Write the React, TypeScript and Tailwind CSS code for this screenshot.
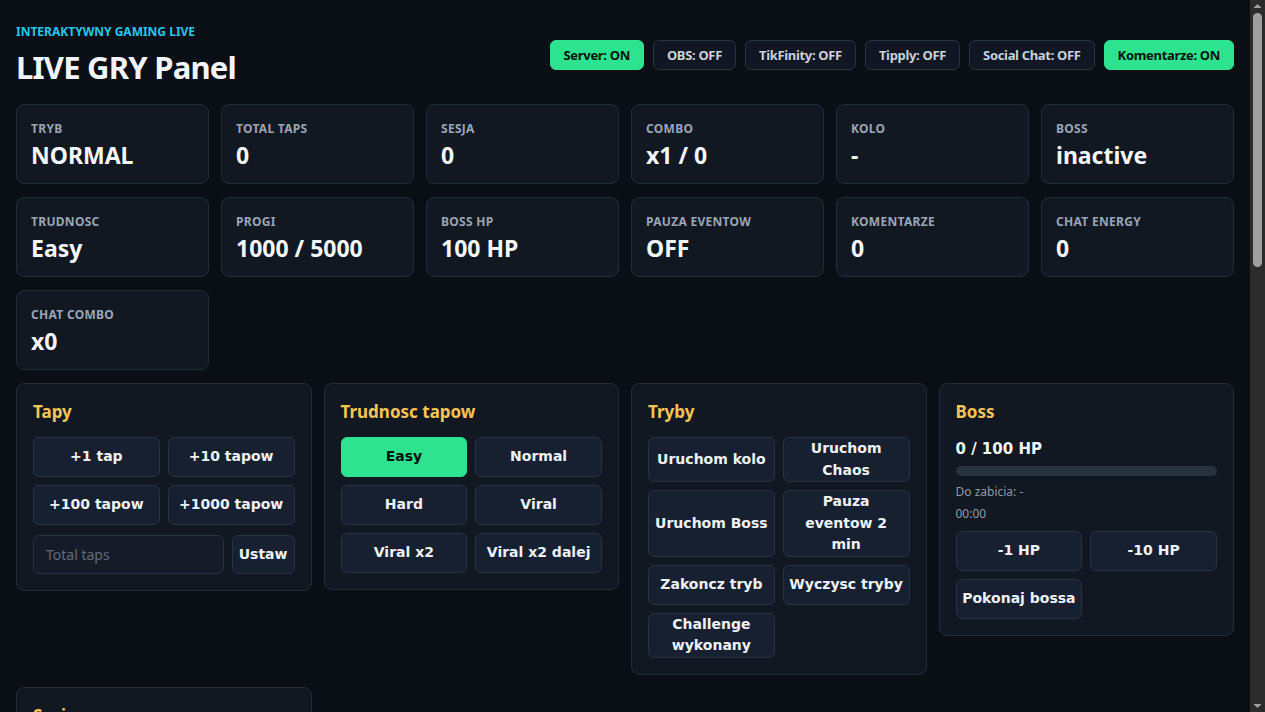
import React from 'react'

const STATS: { label: string; value: string }[] = [
  { label: 'Tryb', value: 'NORMAL' },
  { label: 'Total taps', value: '0' },
  { label: 'Sesja', value: '0' },
  { label: 'Combo', value: 'x1 / 0' },
  { label: 'Kolo', value: '-' },
  { label: 'Boss', value: 'inactive' },
  { label: 'Trudnosc', value: 'Easy' },
  { label: 'Progi', value: '1000 / 5000' },
  { label: 'Boss HP', value: '100 HP' },
  { label: 'Pauza eventow', value: 'OFF' },
  { label: 'Komentarze', value: '0' },
  { label: 'Chat energy', value: '0' },
  { label: 'Chat combo', value: 'x0' },
]

const STATUS: { label: string; on: boolean }[] = [
  { label: 'Server: ON', on: true },
  { label: 'OBS: OFF', on: false },
  { label: 'TikFinity: OFF', on: false },
  { label: 'Tipply: OFF', on: false },
  { label: 'Social Chat: OFF', on: false },
  { label: 'Komentarze: ON', on: true },
]

const btnFont = { fontFamily: '"DejaVu Sans", Verdana, sans-serif' }

function Btn({ children, active = false }: { children: React.ReactNode; active?: boolean }) {
  return (
    <button
      style={btnFont}
      className={
        active
          ? 'min-h-[40px] rounded-md border border-[#2ee38f] bg-[#2ee38f] px-[5px] py-0 text-[14px] leading-[21.5px] font-bold text-[#06130c]'
          : 'min-h-[40px] rounded-md border border-[#283243] bg-[#172030] px-[5px] py-0 text-[14px] leading-[21.5px] font-bold text-[#eef2f7]'
      }
    >
      {children}
    </button>
  )
}

function Panel({ title, children }: { title: string; children: React.ReactNode }) {
  return (
    <div className="rounded-lg border border-[#232c3a] bg-[#121822] p-4">
      <h2 className="mb-[13px] text-[17px] leading-6 font-bold text-[#f6c453]">{title}</h2>
      {children}
    </div>
  )
}

// window scrollbar (the page is longer than the viewport)
function Scrollbar() {
  return (
    <div className="fixed top-0 right-0 flex h-screen w-[15px] flex-col items-center bg-[#2b2b2b]">
      <svg width="15" height="13" viewBox="0 0 15 13" className="shrink-0">
        <path d="M3.5 8 L7.5 4 L11.5 8 Z" fill="#a3a3a3" />
      </svg>
      <div className="h-[254px] w-[9px] shrink-0 rounded-full bg-[#9f9f9f]" />
      <div className="flex-1" />
      <svg width="15" height="13" viewBox="0 0 15 13" className="shrink-0">
        <path d="M3.5 5 L7.5 9 L11.5 5 Z" fill="#a3a3a3" />
      </svg>
    </div>
  )
}

export default function App() {
  return (
    <div
      className="min-h-screen bg-[#0a0e15] pt-6 pr-[31px] pb-10 pl-4 text-[#eef2f7]"
      style={{ fontFamily: '"Noto Sans", "Open Sans", sans-serif' }}
    >
      {/* Header */}
      <div className="flex items-center justify-between">
        <div>
          <div className="text-[12px] leading-4 font-bold text-[#22c8ee] uppercase">Interaktywny gaming live</div>
          <h1 className="mt-[9px] text-[31px] leading-9 font-bold tracking-tight text-[#f1f5fa]">LIVE GRY Panel</h1>
        </div>
        <div className="flex items-center gap-[9px]">
          {STATUS.map((s) => (
            <span
              key={s.label}
              className={
                s.on
                  ? 'rounded-md border border-[#2ee38f] bg-[#2ee38f] px-[13px] py-[6px] text-[13px] leading-4 font-bold tracking-tight text-[#06130c]'
                  : 'rounded-md border border-[#2a3342] bg-[#111722] px-[13px] py-[6px] text-[13px] leading-4 font-bold tracking-tight text-[#c9d1dc]'
              }
            >
              {s.label}
            </span>
          ))}
        </div>
      </div>

      {/* Stat cards */}
      <div className="mt-[19px] grid grid-cols-6 gap-x-3 gap-y-[13px]">
        {STATS.map((s) => (
          <div key={s.label} className="rounded-lg border border-[#232c3a] bg-[#121822] px-[14px] pt-4 pb-[13px]">
            <div className="text-[12px] leading-4 font-bold tracking-[0.3px] text-[#9aa5b5] uppercase">{s.label}</div>
            <div className="mt-[3px] text-[23px] leading-[30px] font-bold text-[#f4f7fb]">{s.value}</div>
          </div>
        ))}
      </div>

      {/* Control panels */}
      <div className="mt-[13px] grid grid-cols-4 items-start gap-3">
        <Panel title="Tapy">
          <div className="grid grid-cols-2 gap-2">
            <Btn>+1 tap</Btn>
            <Btn>+10 tapow</Btn>
            <Btn>+100 tapow</Btn>
            <Btn>+1000 tapow</Btn>
          </div>
          <div className="mt-2.5 flex gap-2">
            <input
              placeholder="Total taps"
              className="h-[39px] min-w-0 flex-1 rounded-md border border-[#283243] bg-[#151c28] px-3 text-[14px] text-[#eef2f7] outline-none placeholder:text-[#5f6b7c]"
            />
            <button
              style={btnFont}
              className="h-[39px] rounded-md border border-[#283243] bg-[#172030] px-[6px] text-[14px] font-bold text-[#eef2f7]"
            >
              Ustaw
            </button>
          </div>
        </Panel>

        <Panel title="Trudnosc tapow">
          <div className="grid grid-cols-2 gap-2">
            <Btn active>Easy</Btn>
            <Btn>Normal</Btn>
            <Btn>Hard</Btn>
            <Btn>Viral</Btn>
            <Btn>Viral x2</Btn>
            <Btn>Viral x2 dalej</Btn>
          </div>
        </Panel>

        <Panel title="Tryby">
          <div className="grid grid-cols-2 gap-2">
            <Btn>Uruchom kolo</Btn>
            <Btn>Uruchom Chaos</Btn>
            <Btn>Uruchom Boss</Btn>
            <Btn>Pauza eventow 2 min</Btn>
            <Btn>Zakoncz tryb</Btn>
            <Btn>Wyczysc tryby</Btn>
            <Btn>Challenge wykonany</Btn>
          </div>
        </Panel>

        <Panel title="Boss">
          <div style={btnFont} className="mt-[15px] text-[15px] leading-5 font-bold text-[#f4f7fb]">
            0 / 100 HP
          </div>
          <div className="mt-[7px] h-2.5 w-full rounded-full bg-[#283140]">
            <div className="h-full rounded-full bg-[#ef4444]" style={{ width: '0%' }} />
          </div>
          <div className="mt-2 text-[12px] leading-4 text-[#8d98a8]">Do zabicia: -</div>
          <div className="mt-1.5 text-[12px] leading-4 text-[#8d98a8]">00:00</div>
          <div className="mt-[9px] grid grid-cols-2 gap-2">
            <Btn>-1 HP</Btn>
            <Btn>-10 HP</Btn>
            <Btn>Pokonaj bossa</Btn>
          </div>
        </Panel>

        <Panel title="Sesja">
          <div className="grid grid-cols-2 gap-2">
            <Btn>Start sesji</Btn>
            <Btn>Stop sesji</Btn>
            <Btn>Reset sesji</Btn>
            <Btn>Zapisz</Btn>
          </div>
          <div className="mt-2.5 text-[12px] leading-4 text-[#8d98a8]">Czas sesji: 00:00</div>
        </Panel>
      </div>

      <Scrollbar />
    </div>
  )
}
